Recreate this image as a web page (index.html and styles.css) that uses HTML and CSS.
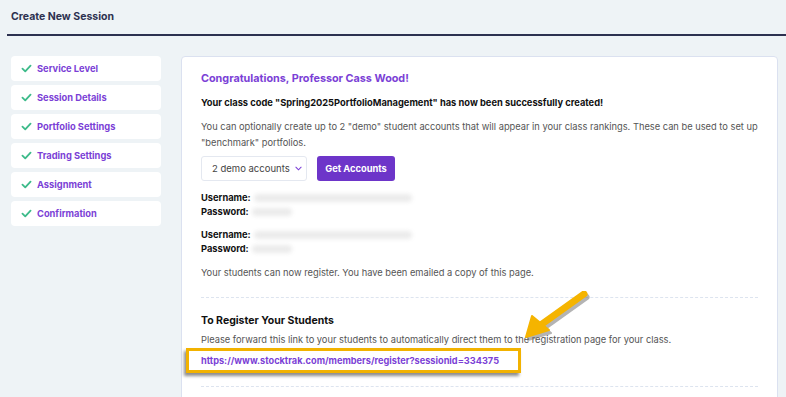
FILE: index.html
```html
<!DOCTYPE html>
<html>
<head>
<meta charset="utf-8">
<link rel="stylesheet" href="styles.css">
</head>
<body>
<div class="page">
  <header class="top">
    <h1 class="title">Create New Session</h1>
  </header>
  <div class="layout">
    <nav class="steps">
      <div class="step"><svg class="check" viewBox="0 0 12 10"><path d="M1.5 5.2 L4.6 8.2 L10.5 1.8" fill="none" stroke="#3dbb8a" stroke-width="2" stroke-linecap="round" stroke-linejoin="round"/></svg><span>Service Level</span></div>
      <div class="step"><svg class="check" viewBox="0 0 12 10"><path d="M1.5 5.2 L4.6 8.2 L10.5 1.8" fill="none" stroke="#3dbb8a" stroke-width="2" stroke-linecap="round" stroke-linejoin="round"/></svg><span>Session Details</span></div>
      <div class="step"><svg class="check" viewBox="0 0 12 10"><path d="M1.5 5.2 L4.6 8.2 L10.5 1.8" fill="none" stroke="#3dbb8a" stroke-width="2" stroke-linecap="round" stroke-linejoin="round"/></svg><span>Portfolio Settings</span></div>
      <div class="step"><svg class="check" viewBox="0 0 12 10"><path d="M1.5 5.2 L4.6 8.2 L10.5 1.8" fill="none" stroke="#3dbb8a" stroke-width="2" stroke-linecap="round" stroke-linejoin="round"/></svg><span>Trading Settings</span></div>
      <div class="step"><svg class="check" viewBox="0 0 12 10"><path d="M1.5 5.2 L4.6 8.2 L10.5 1.8" fill="none" stroke="#3dbb8a" stroke-width="2" stroke-linecap="round" stroke-linejoin="round"/></svg><span>Assignment</span></div>
      <div class="step"><svg class="check" viewBox="0 0 12 10"><path d="M1.5 5.2 L4.6 8.2 L10.5 1.8" fill="none" stroke="#3dbb8a" stroke-width="2" stroke-linecap="round" stroke-linejoin="round"/></svg><span>Confirmation</span></div>
    </nav>
    <main class="card">
      <h2 class="congrats">Congratulations, Professor Cass Wood!</h2>
      <p class="created">Your class code "Spring2025PortfolioManagement" has now been successfully created!</p>
      <p class="info">You can optionally create up to 2 "demo" student accounts that will appear in your class rankings. These can be used to set up "benchmark" portfolios.</p>
      <div class="controls">
        <div class="select">2 demo accounts <svg class="caret" viewBox="0 0 8 5"><path d="M1 1 L4 4 L7 1" fill="none" stroke="#7b3fd6" stroke-width="1.2" stroke-linecap="round"/></svg></div>
        <button class="btn">Get Accounts</button>
      </div>
      <div class="account">
        <div class="cred"><b>Username:</b> <span class="blur long"></span></div>
        <div class="cred"><b>Password:</b> <span class="blur short"></span></div>
      </div>
      <div class="account">
        <div class="cred"><b>Username:</b> <span class="blur long"></span></div>
        <div class="cred"><b>Password:</b> <span class="blur short"></span></div>
      </div>
      <p class="info register">Your students can now register. You have been emailed a copy of this page.</p>
      <hr class="dash">
      <h3 class="sub">To Register Your Students</h3>
      <p class="info fwd">Please forward this link to your students to automatically direct them to the registration page for your class.</p>
      <div class="linkbox"><a class="link" href="#">https://www.stocktrak.com/members/register?sessionid=334375</a></div>
      <hr class="dash last">
      <svg class="arrow" viewBox="0 0 80 60" width="80" height="60">
        <g transform="translate(2,3)" fill="#6b6b6b" stroke="#6b6b6b" opacity="0.5">
          <line x1="62" y1="3" x2="20" y2="33" stroke-width="7" stroke-linecap="round"/>
          <polygon points="4,46 10,25 27,39" stroke-width="2" stroke-linejoin="round"/>
        </g>
        <g fill="#f5b400" stroke="#f5b400">
          <line x1="62" y1="3" x2="20" y2="33" stroke-width="7" stroke-linecap="round"/>
          <polygon points="4,46 10,25 27,39" stroke-width="2" stroke-linejoin="round"/>
        </g>
      </svg>
    </main>
  </div>
</div>
</body>
</html>
```

FILE: styles.css
```css
* { box-sizing: border-box; }
html, body { margin: 0; padding: 0; }
body {
  background: #eef3f6;
  font-family: Inter, "Open Sans", sans-serif;
  color: #222;
  width: 786px;
  height: 397px;
  overflow: hidden;
}
.page { padding: 0 0 0 7px; }
.top {
  border-bottom: 2px solid #2c3150;
  padding: 10px 0 10px 4px;
  height: 36px;
}
.title {
  margin: 0;
  font-size: 10.5px;
  font-weight: 700;
  color: #2d3150;
  line-height: 14px;
}
.layout {
  display: flex;
  gap: 20px;
  padding: 20px 8px 0 4px;
}
.steps {
  width: 150px;
  flex: none;
  display: flex;
  flex-direction: column;
  gap: 4px;
}
.step {
  background: #fff;
  border-radius: 4px;
  height: 25px;
  display: flex;
  align-items: center;
  padding-left: 10px;
  gap: 5px;
  font-size: 9.3px;
  font-weight: 700;
  color: #7b3fd6;
}
.check { width: 11px; height: 9px; }
.card {
  position: relative;
  flex: 1;
  background: #fff;
  border: 1px solid #dbe1f0;
  border-radius: 4px;
  padding: 14px 19px 0 19px;
  height: 360px;
}
.congrats {
  margin: 0;
  font-size: 10.8px;
  font-weight: 700;
  color: #7b3fd6;
  line-height: 16px;
}
.created {
  margin: 8px 0 0;
  font-size: 9.3px;
  font-weight: 700;
  color: #111;
  line-height: 16px;
}
.info {
  margin: 8px 0 0;
  font-size: 9.3px;
  color: #555;
  line-height: 16px;
}
.controls {
  display: flex;
  gap: 10px;
  margin-top: 5px;
}
.select {
  width: 106px;
  height: 25px;
  border: 1px solid #e4e8f0;
  border-radius: 3px;
  display: flex;
  align-items: center;
  padding-left: 10px;
  gap: 5px;
  font-size: 9.5px;
  color: #444;
}
.caret { width: 7px; height: 5px; }
.btn {
  width: 78px;
  height: 25px;
  border: none;
  border-radius: 3px;
  background: #6d35c9;
  color: #fff;
  font-family: inherit;
  font-size: 9.3px;
  font-weight: 700;
  padding: 0;
}
.account { margin-top: 10px; }
.account + .account { margin-top: 9px; }
.cred {
  font-size: 9.3px;
  line-height: 14px;
  color: #111;
  display: flex;
  align-items: center;
  gap: 3px;
}
.blur {
  display: inline-block;
  height: 8px;
  border-radius: 4px;
  background: #ebebeb;
  filter: blur(2px);
}
.blur.long { width: 158px; }
.blur.short { width: 40px; }
.register { margin-top: 9px; }
.dash {
  border: none;
  border-top: 1px dashed #dde4ef;
  margin: 16px 0 0;
}
.sub {
  margin: 16px 0 0;
  font-size: 10.5px;
  font-weight: 700;
  color: #111;
  line-height: 14px;
}
.fwd { margin-top: 4px; }
.linkbox {
  margin: 0 0 0 -15px;
  width: 335px;
  height: 25px;
  border: 3px solid #f2b200;
  box-shadow: -2px 3px 3px rgba(0,0,0,0.45);
  display: flex;
  align-items: center;
  padding-left: 12px;
}
.link {
  font-size: 9.2px;
  font-weight: 700;
  color: #7b3fd6;
  text-decoration: none;
  white-space: nowrap;
}
.last { margin-top: 13px; }
.arrow {
  position: absolute;
  left: 340px;
  top: 234px;
}
```
